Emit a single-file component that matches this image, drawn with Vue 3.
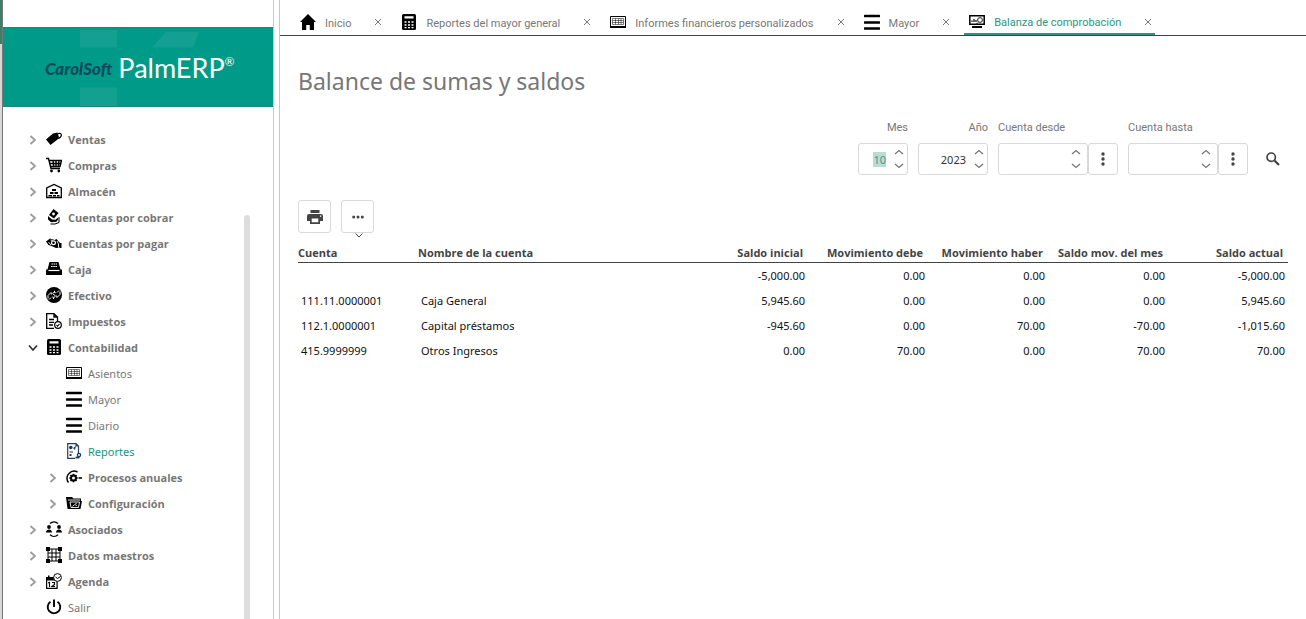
<script setup>
import { onMounted, ref } from 'vue'

const menu = [
  { label: 'Ventas', icon: 'tag', group: true },
  { label: 'Compras', icon: 'cart', group: true },
  { label: 'Almacén', icon: 'warehouse', group: true },
  { label: 'Cuentas por cobrar', icon: 'receive', group: true },
  { label: 'Cuentas por pagar', icon: 'pay', group: true },
  { label: 'Caja', icon: 'register', group: true },
  { label: 'Efectivo', icon: 'cash', group: true },
  { label: 'Impuestos', icon: 'tax', group: true },
  { label: 'Contabilidad', icon: 'calculator', group: true, open: true },
  { label: 'Asientos', icon: 'grid', child: true },
  { label: 'Mayor', icon: 'bars', child: true },
  { label: 'Diario', icon: 'bars', child: true },
  { label: 'Reportes', icon: 'report', child: true, current: true },
  { label: 'Procesos anuales', icon: 'process', child: true, group: true },
  { label: 'Configuración', icon: 'folder', child: true, group: true },
  { label: 'Asociados', icon: 'people', group: true },
  { label: 'Datos maestros', icon: 'frame', group: true },
  { label: 'Agenda', icon: 'agenda', group: true },
  { label: 'Salir', icon: 'power' }
]

const tabs = [
  { label: 'Inicio', icon: 'home' },
  { label: 'Reportes del mayor general', icon: 'calculator' },
  { label: 'Informes financieros personalizados', icon: 'grid' },
  { label: 'Mayor', icon: 'bars' },
  { label: 'Balanza de comprobación', icon: 'monitor', active: true }
]

const filters = ref([
  { id: 'mes', label: 'Mes', value: '10', size: 'short' },
  { id: 'anio', label: 'Año', value: '2023', size: 'medium' },
  { id: 'desde', label: 'Cuenta desde', value: '', size: 'long', lookup: true },
  { id: 'hasta', label: 'Cuenta hasta', value: '', size: 'long', lookup: true }
])

const amountColumns = ['Saldo inicial', 'Movimiento debe', 'Movimiento haber', 'Saldo mov. del mes', 'Saldo actual']

const rows = [
  { account: '', name: '', amounts: ['-5,000.00', '0.00', '0.00', '0.00', '-5,000.00'] },
  { account: '111.11.0000001', name: 'Caja General', amounts: ['5,945.60', '0.00', '0.00', '0.00', '5,945.60'] },
  { account: '112.1.0000001', name: 'Capital préstamos', amounts: ['-945.60', '0.00', '70.00', '-70.00', '-1,015.60'] },
  { account: '415.9999999', name: 'Otros Ingresos', amounts: ['0.00', '70.00', '0.00', '70.00', '70.00'] }
]

onMounted(() => {
  document.getElementById('mes').select()
})
</script>

<template>
  <svg class="sprite" aria-hidden="true">
    <symbol id="tag" viewBox="0 0 16 16">
      <path d="M0 8.500 7 2.500 11.500 1.500l1.500 5-1.500 2L4.500 14z" />
      <path d="M10 5.500C11 2.500 14 1.500 15 3s-.5 4-3 4.500" fill="none" stroke="currentColor" stroke-width="1.200" />
    </symbol>
    <symbol id="cart" viewBox="0 0 16 16">
      <path d="M0 1.500h2.500L5 11.500h9M3.500 3.500h12l-1.500 6H5M4 6.500h11M7 3.500l.7 6M10 3.500v6M13 3.500l-.7 6" fill="none" stroke="currentColor" stroke-width="1.400" />
      <circle cx="5.500" cy="14" r="1.400" /><circle cx="12.800" cy="14" r="1.400" />
    </symbol>
    <symbol id="warehouse" viewBox="0 0 16 16">
      <path d="M.7 14.500V5L8 1.500 15.300 5v9.500z" fill="none" stroke="currentColor" stroke-width="1.300" />
      <path d="M6 6h4v2H6zM4 9h3.500v2H4zM8.500 9H12v2H8.500zM2.500 12H6v1.500H2.500zM7 12h3v1.500H7zM11 12h2.500v1.500H11z" />
    </symbol>
    <symbol id="receive" viewBox="0 0 16 16">
      <path d="M7.500 0 12.500 4 8 9.500 3 6z" /><circle cx="7.500" cy="5" r="1.400" fill="#fff" />
      <path d="M2 7l4 3.500 3.500.3 2-1.800 1 .8-2 3-5.500.5L2 10.500z" />
      <path d="M4.500 15h4.500l4-1.500V8" fill="none" stroke="currentColor" stroke-width="1" />
    </symbol>
    <symbol id="pay" viewBox="0 0 16 16">
      <path d="M0 6.500l4-3L8.500 5l2-1L14 8v4.500l-4 .5-4.500-2L2.500 10z" />
      <circle cx="7.500" cy="7.800" r="1.900" fill="none" stroke="#fff" stroke-width="1.200" />
      <path d="M2.500 7 5 10M11 6l1.500 3v3.500M4.500 5l2 .5" fill="none" stroke="#fff" stroke-width=".9" /><path d="M14 8h1.500v5H14z" />
    </symbol>
    <symbol id="register" viewBox="0 0 16 16">
      <path d="M3.500 1H12.500l2 7.500H16V14H0V8.500h1.500z" />
      <path d="M5.500 3h5.500M5 5.500h6.500" stroke="#fff" stroke-width="1" stroke-dasharray="1.600 .6" /><path d="M2.500 9.500h11" stroke="#fff" stroke-width="1.200" />
    </symbol>
    <symbol id="cash" viewBox="0 0 16 16">
      <circle cx="8" cy="8" r="8" />
      <path d="M2 11.500V8.500l3-3 .5 2M14 4.500v3l-3 3-.5-2M9.800 5.800C8.500 5 6.800 5.300 6.800 6.500s2.500 1.200 2.500 2.500-1.800 1.700-3 1M8.500 3.800v1.400M7.500 10.500V12M3 12.500l2-2M11 5.500l2-2" fill="none" stroke="#fff" stroke-width="1" />
    </symbol>
    <symbol id="tax" viewBox="0 0 16 16">
      <path d="M8 15.300H.7V.7H8L11.500 4v4M8 .7V4h3.500M3 6.500h5M3 9.300h5M3 12h4" fill="none" stroke="currentColor" stroke-width="1.300" />
      <circle cx="12" cy="12" r="3.300" fill="#fff" stroke="currentColor" stroke-width="1.200" />
      <path d="M10.500 12l1 1.200 2-2.200" fill="none" stroke="currentColor" stroke-width="1.100" />
    </symbol>
    <symbol id="calculator" viewBox="0 0 16 16">
      <rect x="1" width="14" height="16" rx="1.500" />
      <path d="M3.500 2.300h9v2.200h-9zM3.500 7.200h2v1.600h-2zM7 7.200h2v1.600H7zM10.500 7.200h2v1.600h-2zM3.500 10.200h2v1.600h-2zM7 10.200h2v1.600H7zM10.500 10.200h2v1.600h-2zM3.500 13h2v1.300h-2zM7 13h2v1.300H7zM10.500 13h2v1.300h-2z" fill="#fff" />
    </symbol>
    <symbol id="grid" viewBox="0 0 16 16">
      <path d="M.5 2.500h15v10.500H.5z" fill="none" stroke="currentColor" />
      <path d="M0 12h16v2H0z" />
      <path d="M2.500 4.500h11v6h-11zM2.500 6.500h11M2.500 8.500h11M5.500 4.500v6M8.500 4.500v6M11 4.500v6" fill="none" stroke="currentColor" stroke-width=".5" />
    </symbol>
    <symbol id="bars" viewBox="0 0 16 16">
      <path d="M1 2h14M1 8.500h14M1 14.500h14" stroke="currentColor" stroke-width="2.600" stroke-linecap="round" />
    </symbol>
    <symbol id="report" viewBox="0 0 16 16">
      <path d="M9 15.400H1.700V.6H10L12.500 3v7M10 .6V3h2.500" fill="none" stroke="#2c4054" stroke-width="1.200" />
      <circle cx="4.800" cy="4.500" r="1.800" fill="#173b5c" /><path d="M7 5l3-2-1 4zM3.500 8.500H7v1H3.500zM3.500 11h2v2h-2z" fill="#173b5c" />
      <circle cx="13" cy="12" r="1.600" fill="none" stroke="#173b5c" stroke-width="1.300" /><path d="M9.500 14.500h4" stroke="#173b5c" stroke-width="1.800" />
    </symbol>
    <symbol id="process" viewBox="0 0 16 16">
      <path d="M2.500 13.500A6.500 6.500 0 0 1 3 4.500 7 7 0 0 1 11.500 3" fill="none" stroke="currentColor" stroke-width="1.500" />
      <path d="M7.500 4.800v8.400M3.300 9h8.400M4.500 6l6 6M10.500 6l-6 6" stroke="currentColor" stroke-width="1.700" />
      <circle cx="7.500" cy="9" r="2.500" fill="#fff" stroke="currentColor" stroke-width="2" /><path d="M12.500 8.200H16v1.600h-3.500z" />
    </symbol>
    <symbol id="folder" viewBox="0 0 16 16">
      <path d="M0 2h6l1.500 1.500H15V6h1l-1.500 8H1.500z" />
      <path d="M2 5h12M4 7h9.500l-1 5.500H5z" fill="none" stroke="#fff" stroke-width=".9" />
      <path d="M6.500 11.500l2-1.800M10.500 8.500a1 1 0 1 0 .5 1.500" fill="none" stroke="#fff" />
    </symbol>
    <symbol id="people" viewBox="0 0 16 16">
      <path d="M4 2.500a6 6 0 0 1 8 0M4 13.800a6 6 0 0 0 8 0" fill="none" stroke="currentColor" stroke-width="1.300" />
      <circle cx="3" cy="6" r="1.900" /><circle cx="13" cy="6" r="1.900" />
      <path d="M0 11.500C0 7.500 6 7.500 6 11.500zM10 11.500c0-4 6-4 6 0z" />
    </symbol>
    <symbol id="frame" viewBox="0 0 16 16">
      <path d="M2 2h12v12H2zM6 2v12M10 2v12M2 6h12M2 10h12" fill="none" stroke="currentColor" stroke-width="1" />
      <path d="M0 0h4v4H0zM12 0h4v4h-4zM0 12h4v4H0zM12 12h4v4h-4z" />
    </symbol>
    <symbol id="agenda" viewBox="0 0 16 16">
      <path d="M.6 4.600h10.500v10.800H.6z" fill="none" stroke="currentColor" stroke-width="1.200" /><path d="M0 4h11v3.500H0zM2 2.500h1.500V5H2z" />
      <path d="M3.500 9v5M2.300 10l1.200-1M6 9.500h2.500v2L6 13.500h3" fill="none" stroke="currentColor" stroke-width="1.100" />
      <circle cx="11.500" cy="4.500" r="3.900" fill="#fff" stroke="currentColor" /><path d="M9.500 4l2 1.500 3-2" fill="none" stroke="currentColor" />
    </symbol>
    <symbol id="power" viewBox="0 0 16 16">
      <path d="M4.500 2.800a6.300 6.300 0 1 0 7 0M8 .5v7.500" fill="none" stroke="currentColor" stroke-width="1.900" />
    </symbol>
    <symbol id="home" viewBox="0 0 16 16">
      <path d="M8 0l8 8h-2v8H9.800v-5H6.200v5H2V8H0l6-6z" />
    </symbol>
    <symbol id="monitor" viewBox="0 0 16 16">
      <path d="M.8 1.800h14.400v8.400H.8z" fill="none" stroke="currentColor" stroke-width="1.500" /><path d="M3 12h10v2H3z" />
      <path d="M3 8V6.500M5 8V5M7 8V6" stroke="currentColor" stroke-width="1.200" />
      <circle cx="11" cy="6" r="2.400" fill="#fff" stroke="currentColor" stroke-width=".9" /><path d="M9 8.500 7.500 10" stroke="currentColor" />
    </symbol>
    <symbol id="chevron" viewBox="0 0 8 10">
      <path d="M1.500 1 6 5 1.500 9" fill="none" stroke="currentColor" stroke-width="1.700" />
    </symbol>
    <symbol id="caret" viewBox="0 0 10 6">
      <path d="M1 1 5 4.500 9 1" fill="none" stroke="currentColor" stroke-width="1.300" />
    </symbol>
  </svg>

  <div class="shell">
    <div class="window-edge"></div>
    <aside class="sidebar">
      <header class="brand">
        <svg class="brand-shapes" viewBox="0 0 271 80" aria-hidden="true">
          <path d="M76 2h38v18H76zM76 61h38v19H76zM164 4h34l-6 16h-42z" />
        </svg>
        <span class="maker">CarolSoft</span>
        <span class="product">PalmERP<sup>®</sup></span>
      </header>
      <div class="menu-area">
        <nav class="menu">
          <a
            v-for="item in menu"
            :key="item.label"
            href="#"
            class="entry"
            :class="{ group: item.group, child: item.child, current: item.current }"
          >
            <span class="toggle" :class="{ open: item.open }">
              <svg v-if="item.group" width="8" height="10"><use href="#chevron" /></svg>
            </span>
            <svg class="icon" width="16" height="16"><use :href="'#' + item.icon" /></svg>
            <span>{{ item.label }}</span>
          </a>
        </nav>
        <div class="scrollbar"></div>
      </div>
    </aside>

    <main class="main">
      <nav class="tabs">
        <div v-for="tab in tabs" :key="tab.label" class="tab" :class="{ active: tab.active }">
          <a href="#" class="tab-link">
            <svg class="icon" width="16" height="16"><use :href="'#' + tab.icon" /></svg>
            <span class="tab-label">{{ tab.label }}</span>
          </a>
          <button class="close" type="button" :aria-label="'Cerrar ' + tab.label">
            <svg width="8" height="8" viewBox="0 0 8 8"><path d="M1 1l6 6M7 1 1 7" fill="none" stroke="currentColor" /></svg>
          </button>
        </div>
      </nav>

      <section class="content">
        <h1>Balance de sumas y saldos</h1>

        <form class="filters" @submit.prevent>
          <div v-for="f in filters" :key="f.id" class="field" :class="f.size">
            <label :for="f.id">{{ f.label }}</label>
            <div class="controls">
              <div class="box">
                <input :id="f.id" v-model="f.value" type="text" />
                <div class="spinner">
                  <button type="button" class="up" aria-label="Aumentar"><svg width="10" height="6"><use href="#caret" /></svg></button>
                  <button type="button" aria-label="Disminuir"><svg width="10" height="6"><use href="#caret" /></svg></button>
                </div>
              </div>
              <button v-if="f.lookup" type="button" class="lookup" aria-label="Seleccionar cuenta">
                <svg width="4" height="14" viewBox="0 0 4 14"><circle cx="2" cy="2" r="1.700" /><circle cx="2" cy="7" r="1.700" /><circle cx="2" cy="12" r="1.700" /></svg>
              </button>
            </div>
          </div>
          <button type="submit" class="search" aria-label="Buscar">
            <svg width="14" height="14" viewBox="0 0 14 14"><circle cx="5.200" cy="5.200" r="4.200" fill="none" stroke="currentColor" stroke-width="1.700" /><path d="M8.500 8.500 13 13" stroke="currentColor" stroke-width="2.200" /></svg>
          </button>
        </form>

        <div class="toolbar">
          <button type="button" aria-label="Imprimir">
            <svg width="16" height="14" viewBox="0 0 16 14"><path d="M3.500 0h9v3h-9zM2 4h12q2 0 2 2v5h-3v3H3v-3H0V6q0-2 2-2z" /><path d="M4.700 8.500h6.600v3.800H4.700zM13 5.500h1.300v1.300H13z" fill="#fff" /></svg>
          </button>
          <button type="button" aria-label="Más opciones">
            <svg width="12" height="4" viewBox="0 0 12 4"><circle cx="1.700" cy="2" r="1.500" /><circle cx="6" cy="2" r="1.500" /><circle cx="10.300" cy="2" r="1.500" /></svg>
            <svg class="drop" width="8" height="5" viewBox="0 0 8 5"><path d="M.5.500 4 4 7.500.500" fill="none" stroke="currentColor" /></svg>
          </button>
        </div>

        <table>
          <thead>
            <tr>
              <th class="account">Cuenta</th>
              <th>Nombre de la cuenta</th>
              <th v-for="c in amountColumns" :key="c" class="amount">{{ c }}</th>
            </tr>
          </thead>
          <tbody>
            <tr v-for="row in rows" :key="row.account">
              <td>{{ row.account }}</td>
              <td>{{ row.name }}</td>
              <td v-for="(a, i) in row.amounts" :key="i" class="amount">{{ a }}</td>
            </tr>
          </tbody>
        </table>
      </section>
    </main>
  </div>
</template>

<style>
body {
  background: #fff;
}
</style>

<style scoped>
* {
  box-sizing: border-box;
}
.sprite {
  position: absolute;
  width: 0;
  height: 0;
}
svg {
  display: block;
  flex: none;
  fill: currentColor;
}
a {
  color: inherit;
  text-decoration: none;
}
button {
  display: flex;
  align-items: center;
  justify-content: center;
  padding: 0;
  border: 0;
  background: none;
  color: #444;
}
.shell {
  display: flex;
  height: 100vh;
  overflow: hidden;
  font-family: "Noto Sans", "Open Sans", sans-serif;
  font-size: 11px;
  color: #777;
}
.window-edge {
  width: 3px;
  border-right: 1px solid #777;
  background: linear-gradient(#3f7d6b 44px, #d8d8d8 44px);
}
.sidebar {
  display: flex;
  flex-direction: column;
  width: 271px;
  padding-top: 27px;
  border-right: 1px solid #c8c8c8;
}
.brand {
  position: relative;
  display: flex;
  flex: none;
  align-items: center;
  gap: 6px;
  height: 80px;
  padding: 2px 0 0 42px;
  border-top: 1px solid #1b8578;
  border-bottom: 1px solid #1b8578;
  background: #009b88;
  font-family: Lato, sans-serif;
}
.brand-shapes {
  position: absolute;
  inset: 0;
  width: 100%;
  height: 100%;
  color: #14a091;
}
.maker,
.product {
  position: relative;
}
.maker {
  color: #0b4a5c;
  font-size: 17px;
  font-style: italic;
  font-weight: 900;
}
.product {
  color: #fff;
  font-size: 27px;
  line-height: 32px;
}
.product sup {
  font-size: 12px;
  line-height: 12px;
  vertical-align: 12px;
}
.menu-area {
  display: flex;
  flex: 1;
  justify-content: space-between;
  min-height: 0;
  padding: 19px 23px 0 26px;
}
.entry {
  display: flex;
  align-items: center;
  height: 26px;
  white-space: nowrap;
}
.entry.child {
  padding-left: 20px;
}
.entry.group {
  font-family: "Open Sans", sans-serif;
  font-weight: 700;
}
.entry.current {
  color: #159582;
}
.toggle {
  width: 17px;
  padding-top: 2px;
  color: #999;
}
.toggle.open {
  color: #333;
}
.toggle.open svg {
  transform: rotate(90deg);
}
.icon {
  color: #000;
}
.entry .icon {
  margin-right: 6px;
}
.scrollbar {
  width: 6px;
  margin-top: 89px;
  border-radius: 3px 3px 0 0;
  background: #ddd;
}
.main {
  flex: 1;
  min-width: 0;
  margin-left: 5px;
  border-left: 1px solid #c8c8c8;
}
.tabs {
  display: flex;
  gap: 11px;
  height: 36px;
  padding: 10px 15px 0;
  border-bottom: 1px solid #444;
  font-family: Roboto, sans-serif;
}
.tab {
  display: flex;
  align-items: center;
  gap: 23px;
  padding: 0 3px 0 5px;
  border-bottom: 2px solid transparent;
  white-space: nowrap;
}
.tab.active {
  border-color: #2e9385;
}
.tab.active .tab-link {
  color: #2e9385;
}
.tab-link {
  display: flex;
  align-items: center;
  gap: 9px;
}
.tab-label {
  padding-top: 4px;
}
.tab.active .tab-label {
  padding-top: 2px;
}
.close {
  color: #777;
}
.content {
  padding: 26px 18px 0;
}
h1 {
  margin: 0;
  font-size: 23px;
  font-weight: 400;
  line-height: 38px;
}
.filters {
  display: flex;
  align-items: flex-end;
  justify-content: flex-end;
  gap: 10px;
  margin-top: 17px;
}
.field label {
  display: block;
  height: 26px;
  font-family: Roboto, sans-serif;
  line-height: 22px;
}
.short label,
.medium label {
  text-align: right;
}
.controls {
  display: flex;
}
.box {
  display: flex;
  height: 32px;
  border: 1px solid #d9d9d9;
  border-radius: 3px;
}
.short .box {
  width: 50px;
}
.medium .box {
  width: 70px;
}
.long .box {
  width: 90px;
}
input {
  flex: 1;
  width: 0;
  min-width: 0;
  padding: 0;
  border: 0;
  outline: 0;
  background: none;
  color: #333;
  font: inherit;
  text-align: right;
}
input::selection {
  background: #b9dcd3;
  color: #4a9a8a;
}
.spinner {
  display: flex;
  flex-direction: column;
  justify-content: space-between;
  padding: 5px 3px 5px 8px;
}
.long .spinner {
  padding-right: 6px;
}
.spinner button {
  color: #777;
}
.spinner .up svg {
  transform: rotate(180deg);
}
.lookup,
.toolbar button {
  border: 1px solid #d9d9d9;
  border-radius: 3px;
}
.lookup,
.search {
  width: 30px;
  height: 32px;
}
.toolbar {
  display: flex;
  gap: 10px;
  margin-top: 25px;
}
.toolbar button {
  position: relative;
  width: 33px;
  height: 33px;
}
.drop {
  position: absolute;
  bottom: -6px;
  left: 13px;
}
table {
  width: 100%;
  margin-top: 10px;
  border-collapse: separate;
  border-spacing: 0;
  table-layout: fixed;
}
th {
  height: 20px;
  padding: 0;
  border-bottom: 1px solid #444;
  color: #444;
  font-family: "Open Sans", sans-serif;
  font-weight: 700;
  line-height: 18px;
  text-align: left;
  white-space: nowrap;
}
th.account,
th.amount {
  width: 120px;
}
th.amount {
  padding-right: 5px;
  text-align: right;
}
td {
  height: 25px;
  padding: 0 3px;
  color: #111;
}
td.amount {
  text-align: right;
}
</style>
